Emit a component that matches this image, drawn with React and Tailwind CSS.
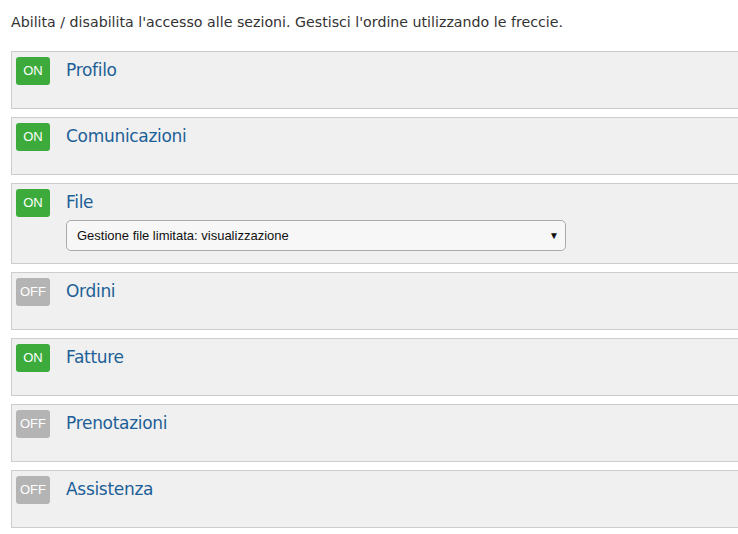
const sections = [
  { name: "Profilo", on: true },
  { name: "Comunicazioni", on: true },
  { name: "File", on: true, select: "Gestione file limitata: visualizzazione" },
  { name: "Ordini", on: false },
  { name: "Fatture", on: true },
  { name: "Prenotazioni", on: false },
  { name: "Assistenza", on: false },
];

function Toggle({ on }) {
  return (
    <div
      className={`w-[34px] h-[28px] rounded-[3px] flex items-center justify-center text-white text-[13px] shrink-0 ${
        on ? "bg-[#3cab3c]" : "bg-[#b4b4b4]"
      }`}
      style={{ fontFamily: '"Liberation Sans", Arial, sans-serif' }}
    >
      {on ? "ON" : "OFF"}
    </div>
  );
}

export default function App() {
  return (
    <div
      className="bg-white w-[738px] h-[534px] overflow-hidden pl-[11px] pt-[12px]"
      style={{ fontFamily: '"DejaVu Sans", sans-serif' }}
    >
      <p className="text-[14.2px] text-[#333] leading-[20px]">
        Abilita / disabilita l'accesso alle sezioni. Gestisci l'ordine utilizzando le freccie.
      </p>
      <div className="mt-[19px] flex flex-col gap-[8px] w-[740px]">
        {sections.map((s) => (
          <div
            key={s.name}
            className="bg-[#f0f0f0] border border-[#cccccc] pt-[5px] pl-[4px] min-h-[58px] flex items-start"
          >
            <Toggle on={s.on} />
            <div className="ml-[16px] flex flex-col">
              <div className="h-[28px] flex items-center text-[17px] text-[#1d5f97] tracking-[-0.3px]">
                {s.name}
              </div>
              {s.select && (
                <div
                  className="mt-[3px] mb-[12px] w-[500px] h-[31px] border border-[#aaaaaa] rounded-[5px] bg-[#f7f7f7] flex items-center justify-between pl-[10px] pr-[6px] text-[13px] text-[#111]"
                  style={{ fontFamily: '"Liberation Sans", Arial, sans-serif' }}
                >
                  <span>{s.select}</span>
                  <span className="text-[10px]">▼</span>
                </div>
              )}
            </div>
          </div>
        ))}
      </div>
    </div>
  );
}
